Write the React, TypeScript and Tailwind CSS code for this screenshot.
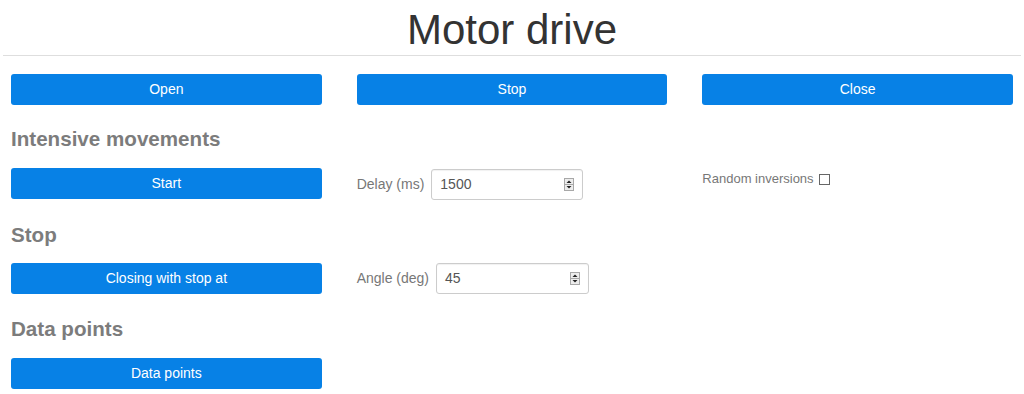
import React from "react";

// shared styles
const btn =
  "h-[31px] w-full rounded-[3px] bg-[#0781e6] text-[14px] text-white flex items-center justify-center";
const heading = "text-[20.6px] font-bold leading-[24px] text-[#7c7c7c]";
const label = "text-[14px] text-[#777]";

function Spinner() {
  return (
    <svg width="10" height="13" viewBox="0 0 10 13">
      <rect x="0.5" y="0.5" width="9" height="12" fill="#ededed" stroke="#a8a8a8" />
      <line x1="1" y1="6.5" x2="9" y2="6.5" stroke="#a8a8a8" />
      <polygon points="5,2.5 7.5,5 2.5,5" fill="#222" />
      <polygon points="2.5,8 7.5,8 5,10.5" fill="#222" />
    </svg>
  );
}

function NumberField({ value, width }: { value: string; width: string }) {
  return (
    <div
      className={`${width} h-[31px] rounded-[3px] border border-[#ccc] pl-[8px] pr-[8px] flex items-center justify-between text-[14px] text-[#555] shadow-[inset_0_1px_1px_rgba(0,0,0,0.06)]`}
    >
      <span>{value}</span>
      <Spinner />
    </div>
  );
}

export default function App() {
  return (
    <div className="min-h-screen bg-white font-['Liberation_Sans',Arial,sans-serif]">
      <h1 className="pt-[9px] text-center text-[42px] leading-none text-[#333]">Motor drive</h1>
      <hr className="mx-[3px] mt-[4px] border-[#dedede]" />

      <div className="px-[11px]">
        {/* top controls */}
        <div className="mt-[18px] grid grid-cols-3 gap-x-[35px]">
          <button className={btn}>Open</button>
          <button className={btn}>Stop</button>
          <button className={btn}>Close</button>
        </div>

        {/* Intensive movements */}
        <h2 className={`${heading} mt-[22px]`}>Intensive movements</h2>
        <div className="mt-[17px] grid grid-cols-3 gap-x-[35px] items-start">
          <button className={btn}>Start</button>
          <div className="flex items-center gap-[7px] mt-[1px]">
            <span className={label}>Delay (ms)</span>
            <NumberField value="1500" width="w-[152px]" />
          </div>
          <div className="flex items-center gap-[5px] pt-[3px]">
            <span className="text-[13px] leading-[16px] text-[#777]">Random inversions</span>
            <span className="h-[11px] w-[11px] border border-[#666] bg-white" />
          </div>
        </div>

        {/* Stop */}
        <h2 className={`${heading} mt-[23px]`}>Stop</h2>
        <div className="mt-[16px] grid grid-cols-3 gap-x-[35px] items-start">
          <button className={btn}>Closing with stop at</button>
          <div className="flex items-center gap-[7px]">
            <span className={label}>Angle (deg)</span>
            <NumberField value="45" width="w-[153px]" />
          </div>
          <div />
        </div>

        {/* Data points */}
        <h2 className={`${heading} mt-[23px]`}>Data points</h2>
        <div className="mt-[17px] grid grid-cols-3 gap-x-[35px]">
          <button className={btn}>Data points</button>
        </div>
      </div>
    </div>
  );
}
